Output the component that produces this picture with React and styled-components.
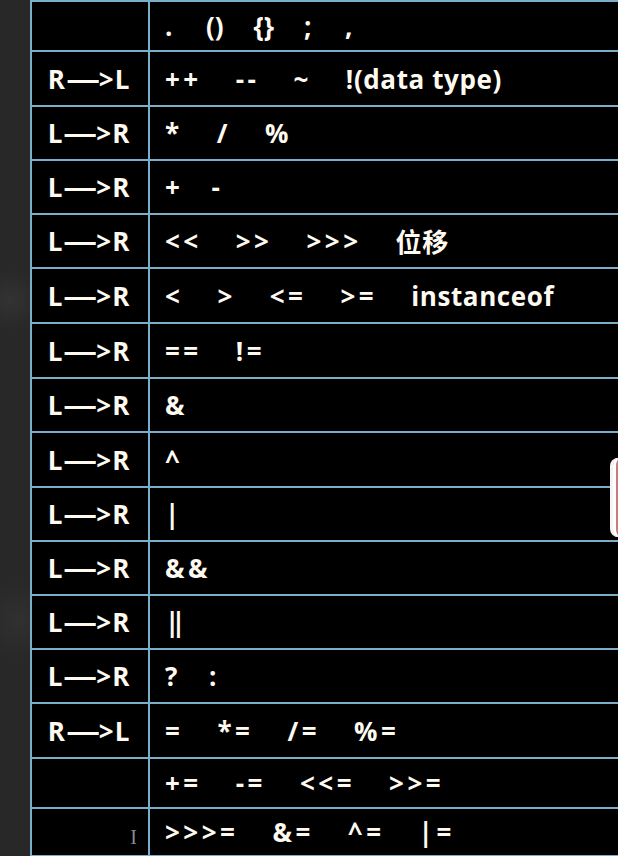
import styled, { createGlobalStyle } from "styled-components";

const GlobalStyle = createGlobalStyle`
  html, body {
    margin: 0;
    padding: 0;
    background: #272727;
    overflow: hidden;
  }
  #root {
    height: 856px;
  }
`;

const Page = styled.div`
  position: relative;
  height: 856px;
  padding-left: 30px;
  background:
    radial-gradient(circle at 10px 300px, #333 0, transparent 30px),
    radial-gradient(circle at 18px 620px, #303030 0, transparent 40px),
    #282828;
  overflow: hidden;
`;

const Sheet = styled.div`
  display: grid;
  grid-template-columns: 118px 1fr;
  border-top: 2px solid #7aaecb;
  border-left: 2px solid #7aaecb;
  background: #000;
  font-family: "Open Sans", "Noto Sans CJK SC", sans-serif;
  font-weight: 700;
  color: #fffaf0;
`;

const Cell = styled.div`
  height: ${(p) => p.$h}px;
  box-sizing: border-box;
  border-bottom: 2px solid #7aaecb;
  display: flex;
  align-items: center;
`;

const DirCell = styled(Cell)`
  border-right: 2px solid #7aaecb;
  justify-content: ${(p) => (p.$cursor ? "flex-end" : "center")};
  padding-right: ${(p) => (p.$cursor ? "10px" : "2px")};
  font-size: 26px;
  letter-spacing: 1px;
`;

const Dash = styled.span`
  letter-spacing: -1px;
  display: inline-block;
  transform: scaleX(1.3);
  margin: 0 4px;
`;

const OpsCell = styled(Cell)`
  padding-left: 15px;
  gap: ${(p) => p.$gap || 34}px;
  font-size: 26px;
  white-space: pre;
`;

const Token = styled.span`
  letter-spacing: ${(p) => p.$ls}px;
`;

const Cursor = styled.span`
  font-family: "Liberation Serif", serif;
  font-weight: 400;
  font-size: 20px;
  color: #8a8a8a;
  margin-top: 10px;
`;

const Popup = styled.div`
  position: absolute;
  left: 610px;
  top: 458px;
  width: 30px;
  height: 79px;
  box-sizing: border-box;
  background: #fdfdfd;
  border-radius: 8px;
  border-left: 3px solid #f4f4f4;
  box-shadow: inset 3px 0 0 #fff, inset 5px 0 0 #c97a7a;
`;

const rows = [
  { h: 50, dir: "", ops: [".", "()", "{}", ";", ","], gap: 30 },
  { h: 55, dir: "R>L", ops: ["++", "--", "~", "!(data type)"] },
  { h: 54, dir: "L>R", ops: ["*", "/", "%"] },
  { h: 54, dir: "L>R", ops: ["+", "-"], gap: 28 },
  { h: 54, dir: "L>R", ops: ["<<", ">>", ">>>", "位移"] },
  { h: 55, dir: "L>R", ops: ["<", ">", "<=", ">=", "instanceof"] },
  { h: 55, dir: "L>R", ops: ["==", "!="] },
  { h: 54, dir: "L>R", ops: ["&"] },
  { h: 55, dir: "L>R", ops: ["^"] },
  { h: 54, dir: "L>R", ops: ["|"] },
  { h: 54, dir: "L>R", ops: ["&&"] },
  { h: 54, dir: "L>R", ops: ["||"] },
  { h: 54, dir: "L>R", ops: ["?", ":"], gap: 28 },
  { h: 55, dir: "R>L", ops: ["=", "*=", "/=", "%="] },
  { h: 50, dir: "", ops: ["+=", "-=", "<<=", ">>="] },
  { h: 48, dir: "", ops: [">>>=", "&=", "^=", "|="], cursor: true },
];

const spacingFor = (op) => {
  if (op === "||") return -8;
  if (op === "()" || op === "{}") return 0;
  if (/[a-z\u4e00-\u9fff]/.test(op)) return 0.6;
  return 3.5;
};

const Direction = ({ value }) => (
  <>
    {value[0]}
    <Dash>—</Dash>
    {value.slice(1)}
  </>
);

const App = () => (
  <Page>
    <GlobalStyle />
    <Sheet>
      {rows.map((r, i) => [
        <DirCell key={`d${i}`} $h={r.h} $cursor={r.cursor}>
          {r.cursor ? <Cursor>I</Cursor> : r.dir ? <Direction value={r.dir} /> : null}
        </DirCell>,
        <OpsCell key={`o${i}`} $h={r.h} $gap={r.gap}>
          {r.ops.map((op) => (
            <Token key={op} $ls={spacingFor(op)}>
              {op}
            </Token>
          ))}
        </OpsCell>,
      ])}
    </Sheet>
    <Popup />
  </Page>
);

export default App;
